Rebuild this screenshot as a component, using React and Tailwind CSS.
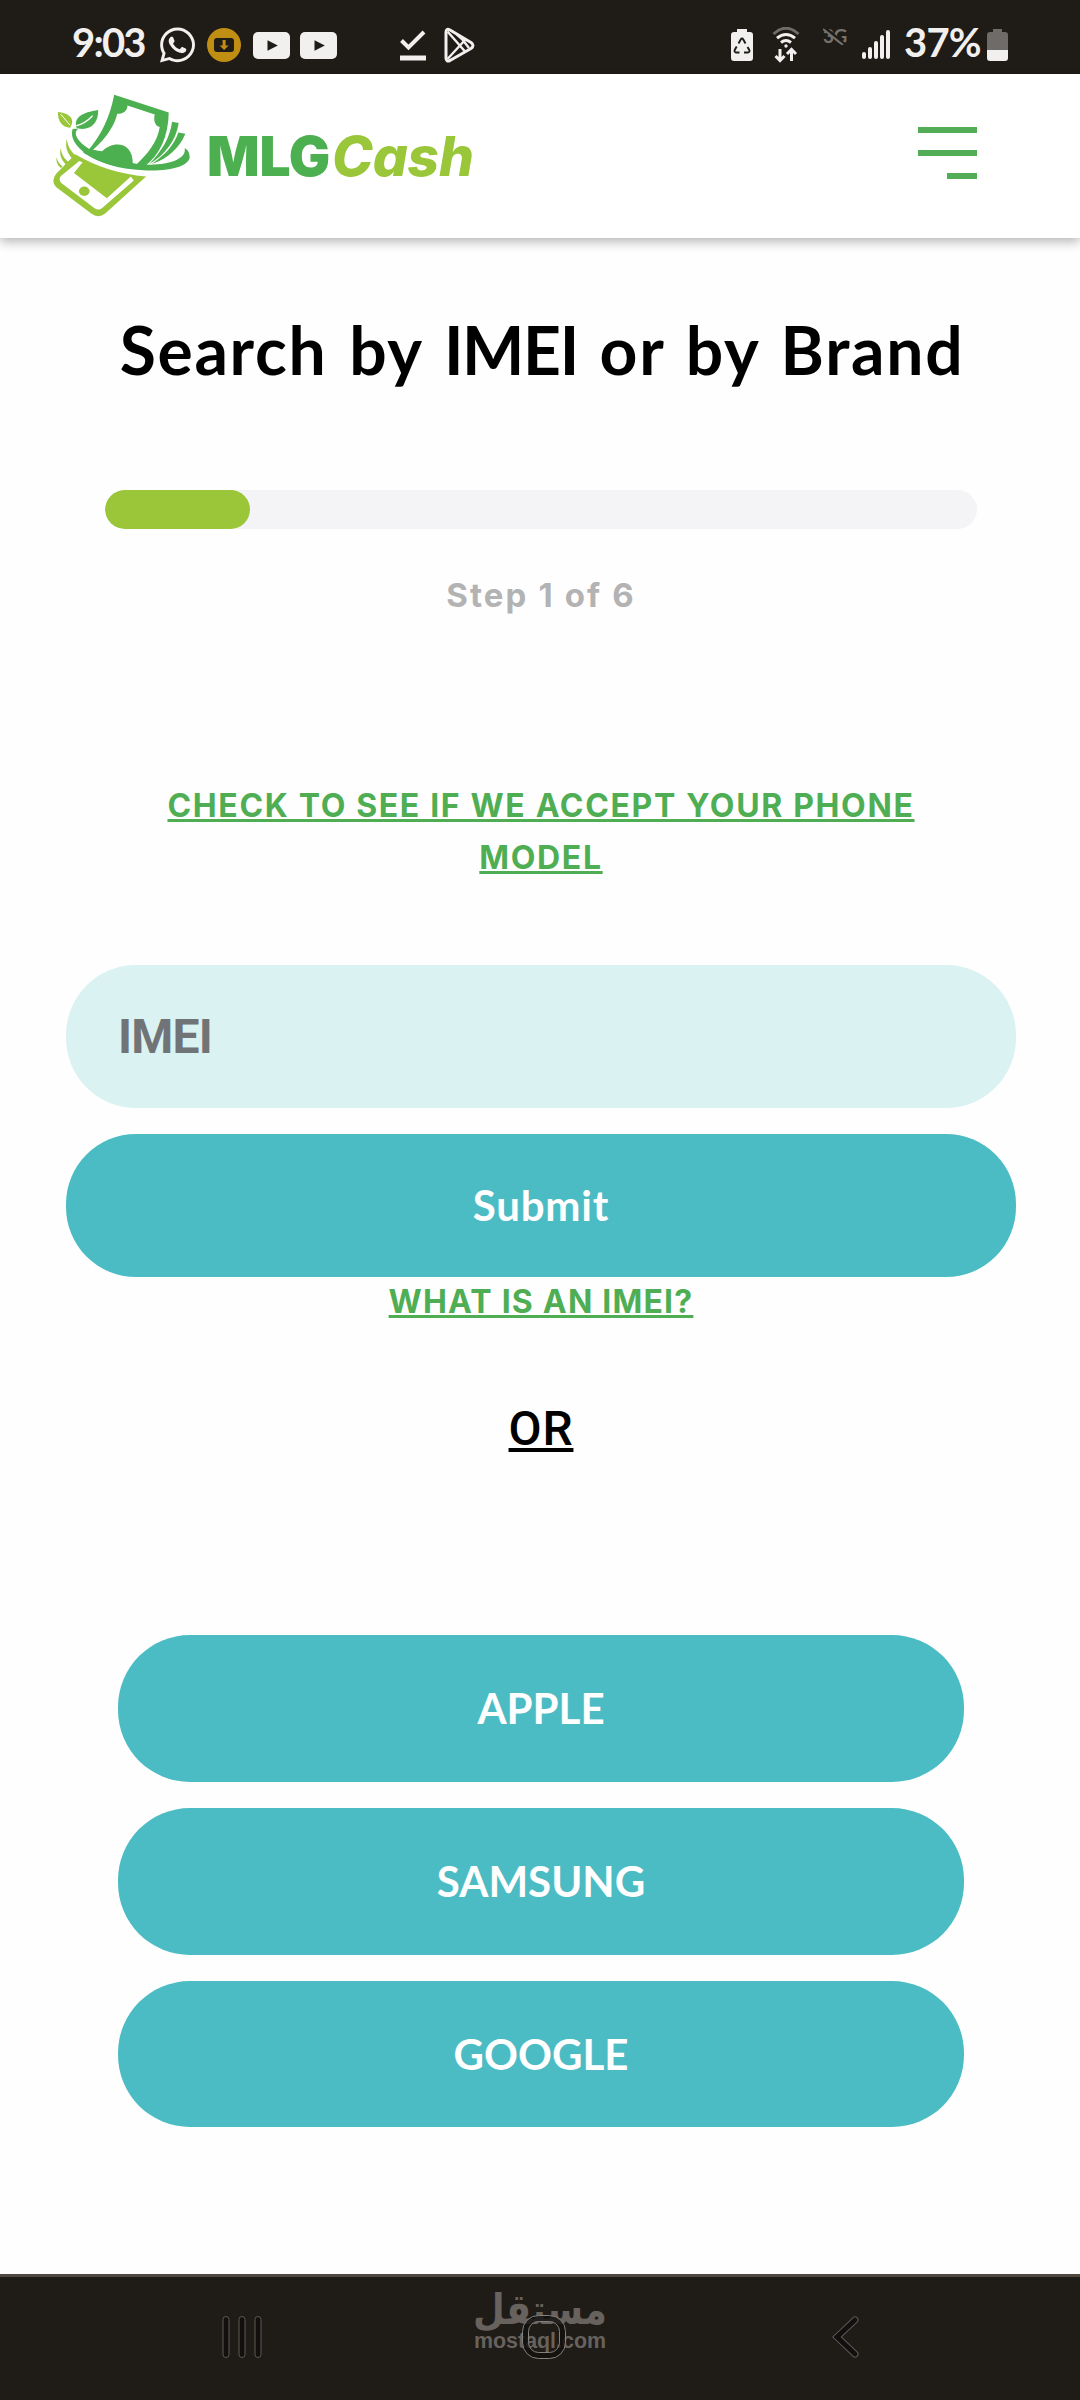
import { FaWhatsapp } from 'react-icons/fa'

const brands = ['APPLE', 'SAMSUNG', 'GOOGLE']
const step = 1
const totalSteps = 6

function YoutubeIcon({ className }) {
  return (
    <svg viewBox="0 0 37 27" className={`h-[27px] w-[37px] ${className}`}>
      <rect width="37" height="27" rx="5" fill="#f1f0ef" />
      <path d="M14.5 8.2v10.6l10.3-5.3z" fill="#1f1b17" />
    </svg>
  )
}

function StatusBar() {
  return (
    <div className="flex h-[74px] items-start bg-[#1f1b17] font-[Lato] text-[#f1f0ef]">
      <span className="mt-[18px] ml-[72px] w-[74px] text-[40px] leading-[48px] font-bold tracking-[-1.8px] whitespace-nowrap">9:03</span>
      <FaWhatsapp className="mt-[25px] ml-[14px] h-[40px] w-[35px]" />
      <svg viewBox="0 0 34 34" className="mt-[28px] ml-[12px] h-[34px] w-[34px]">
        <circle cx="17" cy="17" r="17" fill="#c18e14" />
        <rect x="7" y="10" width="20" height="14" rx="3" fill="#1f1b17" />
        <path d="M15.6 12h3v5.500h3l-4.500 4.500-4.500-4.500h3z" fill="#c18e14" />
      </svg>
      <YoutubeIcon className="mt-[32px] ml-[12px]" />
      <YoutubeIcon className="mt-[32px] ml-[10px]" />
      <svg viewBox="0 0 26 31" className="mt-[30px] ml-[63px] h-[31px] w-[26px]">
        <path d="M1.500 10.500l7 7L24 2" fill="none" stroke="#f1f0ef" strokeWidth="4" />
        <path d="M0 28h26" stroke="#f1f0ef" strokeWidth="5" />
      </svg>
      <svg viewBox="0 0 32 36" className="mt-[27px] ml-[18px] h-[36px] w-[32px]" fill="none" stroke="#f1f0ef" strokeLinejoin="round">
        <path d="M2 5Q2 1 6 3L27 15.500Q31 18.500 27 21.500L6 33.500Q2 35 2 31Z" strokeWidth="3" />
        <path d="M3.500 32L21.500 12.500M3.500 4.500L21.500 25M13 7.500L18 12L25 21" strokeWidth="2.400" />
      </svg>

      <svg viewBox="0 0 22 32" className="mt-[29px] ml-[255px] h-[32px] w-[22px]">
        <path d="M6 0h10v3h3q3 0 3 3v23q0 3-3 3h-16q-3 0-3-3v-23q0-3 3-3h3z" fill="#f1f0ef" />
        <path d="M7.500 14.500l2.200-4q1.300-2 2.600 0l2.200 4M16.500 18l1.800 3q.8 2-1.300 2.500h-4M8.500 23.500h-3.500q-2-.5-1.300-2.500l2-3.500" fill="none" stroke="#1f1b17" strokeWidth="1.900" />
      </svg>
      <svg viewBox="0 0 28 36" className="mt-[27px] ml-[19px] h-[36px] w-[28px]" fill="none" stroke="#f1f0ef" strokeWidth="3">
        <path d="M1.500 7q12.500-11.500 25 0" stroke="#6f6b68" />
        <path d="M5 11.200q9-7.500 18 0M9 15.500q5-4 10 0" />
        <circle cx="14" cy="19" r="1.700" fill="#f1f0ef" stroke="none" />
        <path d="M8 22v11.500M3.500 29l4.500 4.700 4.500-4.700M19.500 34v-11.500M15 27l4.500-4.700 4.500 4.700" />
      </svg>
      <div className="relative mt-[27px] ml-[23px] h-[18px] w-[24px] text-[#76726e]">
        <span className="block text-[19px] leading-[17px] font-bold tracking-[-0.5px]">3G</span>
        <svg viewBox="0 0 24 18" className="absolute inset-0">
          <path d="M1 0l20 17" stroke="#1f1b17" strokeWidth="3" />
          <path d="M0 2l20 16" stroke="#76726e" strokeWidth="2" />
        </svg>
      </div>
      <div className="mt-[30px] ml-[15px] flex h-[29px] w-[28px] items-end justify-between">
        <i className="h-[7px] w-[4px] rounded-full bg-[#f1f0ef]" />
        <i className="h-[12px] w-[4px] rounded-full bg-[#f1f0ef]" />
        <i className="h-[18px] w-[4px] rounded-full bg-[#f1f0ef]" />
        <i className="h-[24px] w-[4px] rounded-full bg-[#f1f0ef]" />
        <i className="h-[29px] w-[4px] rounded-full bg-[#f1f0ef]" />
      </div>
      <span className="mt-[18px] ml-[14px] w-[79px] text-[40px] leading-[48px] font-bold tracking-[-0.8px] whitespace-nowrap">37%</span>
      <svg viewBox="0 0 21 32" className="mt-[29px] ml-[4px] h-[32px] w-[21px]">
        <path d="M6 0h9v3h3q3 0 3 3v15h-21v-15q0-3 3-3h3z" fill="#6f6b68" />
        <path d="M0 21h21v8q0 3-3 3h-15q-3 0-3-3z" fill="#f1f0ef" />
      </svg>
    </div>
  )
}

function LogoMark() {
  return (
    <svg viewBox="60 40 430 375" className="h-[125px] w-[143px]">
      {/* light leaf, speed lines and phone body */}
      <g fill="#9ac63a">
        <path d="M84 97C112 100 131 112 126 132L121 144C94 143 83 122 84 97Z" />
        <path d="M110 178C114 200 121 213 137 228L126 236C110 217 106 202 110 178Z" />
        <path d="M92 205C95 226 103 237 116 247L108 255C92 238 88 224 92 205Z" />
        <path d="M80 232C83 246 88 253 98 260L93 265C82 256 78 247 80 232Z" />
        <path d="M136 224C200 262 270 284 349 291L226 402Q205 418 184 402L78 322Q62 304 78 283Z" />
      </g>
      <path d="M148 244L93 289Q84 300 95 311L194 386Q206 394 217 385L312 303L303 291L231 356L132 280L158 248Z" fill="#fff" />
      <ellipse cx="163" cy="335" rx="16" ry="14" fill="#9ac63a" />
      <path d="M92 103L120 136" stroke="#fff" strokeWidth="3" />

      {/* dark leaf, orbit and banknotes */}
      <g fill="#4caf50">
        <path d="M205 91C206 129 184 151 149 147L139 143C132 112 157 99 205 91Z" />
        <path d="M128 148C112 195 190 265 340 272C425 276 480 258 480 231C479 217 474 210 465 206C472 240 410 260 335 254C240 248 155 207 139 169Q134 154 146 146Z" />
        <path d="M253 45L417 98C416 170 390 227 342 262L170 218C216 165 240 112 253 45Z" />
        <path d="M427 126L447 130C439 184 405 226 358 254C399 211 421 172 427 126Z" />
        <path d="M446 158L467 162C449 205 416 236 366 253C409 222 433 196 446 158Z" />
      </g>
      <path d="M139 138C162 133 174 123 188 108" fill="none" stroke="#fff" strokeWidth="4" />
      <path d="M293 77L375 104C370 123 377 139 390 142C383 188 352 225 318 256L309 252C310 183 247 182 215 216L188 212C236 170 257 128 262 102C280 103 293 93 293 77Z" fill="#fff" />
      <path d="M170 207L215 215L260 228L308 250L335 255L338 268C260 266 205 247 160 219Z" fill="#4caf50" />
    </svg>
  )
}

function Header() {
  return (
    <header className="flex h-[164px] items-start bg-white shadow-[0_4px_10px_rgba(0,0,0,0.28)]">
      <div className="mt-[19px] ml-[50px] flex">
        <LogoMark />
        <p className="mt-[30px] ml-[14px] font-[Inter] text-[55px] leading-[66px] font-black tracking-[-0.2px] text-[#4caf50]">
          MLG<span className="ml-[2px] font-extrabold tracking-[-0.2px] text-[#9ac63a] italic">Cash</span>
        </p>
      </div>
      <button className="mt-[53px] mr-[103px] ml-auto flex w-[59px] flex-col items-end gap-[17px]">
        <span className="h-[6px] w-full bg-[#53ad57]" />
        <span className="h-[6px] w-full bg-[#53ad57]" />
        <span className="h-[6px] w-[30px] bg-[#53ad57]" />
      </button>
    </header>
  )
}

function NavBar() {
  return (
    <nav className="relative mt-auto h-[126px] border-t-[3px] border-[#4f463f] bg-[#1f1b17]">
      <div className="flex items-center pt-[37px]">
        <svg viewBox="0 0 42 44" className="ml-[221px] h-[44px] w-[42px]" fill="#12100e" stroke="#5d5956">
          <rect x="2" y="1.500" width="6" height="41" rx="3" />
          <rect x="18" y="1.500" width="6" height="41" rx="3" />
          <rect x="34" y="1.500" width="6" height="41" rx="3" />
        </svg>
        <svg viewBox="0 0 46 46" className="relative z-10 ml-[258px] h-[46px] w-[46px]" fill="none">
          <rect x="4.500" y="4.500" width="37" height="37" rx="13" stroke="#12100e" strokeWidth="6" strokeOpacity="0.8" />
          <rect x="1.500" y="1.500" width="43" height="43" rx="16" stroke="#85817e" />
          <rect x="7.500" y="7.500" width="31" height="31" rx="10" stroke="#85817e" />
        </svg>
        <svg viewBox="0 0 28 44" className="ml-[265px] h-[44px] w-[28px]" strokeLinecap="round" fill="none">
          <path d="M23 5L5 22L23 39" stroke="#5d5956" strokeWidth="7" />
          <path d="M23 5L5 22L23 39" stroke="#12100e" strokeWidth="5" />
        </svg>
      </div>
      <svg viewBox="0 0 130 70" className="absolute top-[11px] left-[475px] h-[70px] w-[130px] overflow-visible" fill="#67625e">
        <text x="65" y="36" textAnchor="middle" direction="rtl" textLength="134" lengthAdjust="spacingAndGlyphs" className="font-['DejaVu_Sans'] text-[42px] font-bold">مستقل</text>
        <text x="-1" y="60" textLength="132" lengthAdjust="spacingAndGlyphs" className="font-['Liberation_Sans'] text-[22px] font-bold">mostaql.com</text>
      </svg>
    </nav>
  )
}

export default function App() {
  return (
    <div className="flex h-[2400px] w-[1080px] flex-col overflow-hidden bg-[#fefefe]">
      <StatusBar />
      <Header />

      <main className="flex flex-col items-center pl-[2px]">
        <h1 className="mt-[72px] pl-[2px] font-[Lato] text-[66px] leading-[80px] font-bold tracking-[1.7px] [word-spacing:4px] whitespace-nowrap text-black">
          Search by <span className="tracking-[-1.4px]">IMEI</span> or by Brand
        </h1>
        <div className="mt-[100px] h-[39px] w-[872px] overflow-hidden rounded-full bg-[#f4f4f6]">
          <div className="h-full rounded-full bg-[#9bc63a]" style={{ width: `${(step / totalSteps) * 100}%` }} />
        </div>
        <p className="mt-[45px] font-[Inter] text-[33px] leading-[42px] font-bold tracking-[2.1px] text-[#b3b3b3]">
          Step {step} of {totalSteps}
        </p>

        <a className="mt-[164px] w-[800px] text-center font-[Inter] text-[32px] leading-[52px] font-bold tracking-[1.65px] text-[#4fae54] underline decoration-[3px] underline-offset-[2px] [text-decoration-skip-ink:none]">
          CHECK TO SEE IF WE ACCEPT YOUR PHONE MODEL
        </a>

        <input
          placeholder="IMEI"
          className="mt-[81px] h-[143px] w-[950px] rounded-[70px] bg-[#daf2f1] px-[52px] font-[Roboto] text-[48px] font-bold tracking-[-0.8px] placeholder:text-[#717477]"
        />
        <button className="mt-[26px] h-[143px] w-[950px] rounded-[70px] bg-[#4bbcc4] font-[Lato] text-[42px] font-bold tracking-[0.8px] text-white">
          Submit
        </button>
        <a className="font-[Inter] text-[32px] leading-[50px] font-bold tracking-[1.2px] text-[#4fae54] underline decoration-[3px] underline-offset-[2px] [text-decoration-skip-ink:none]">
          WHAT IS AN IMEI?
        </a>

        <p className="mt-[72px] font-[Roboto] text-[48px] leading-[60px] font-medium tracking-[0.8px] text-black underline decoration-[4px] underline-offset-[3px] [text-decoration-skip-ink:none]">
          OR
        </p>

        <div className="mt-[176px] flex flex-col gap-[26px]">
          {brands.map((brand) => (
            <button key={brand} className="h-[147px] w-[846px] rounded-[72px] bg-[#4bbcc4] font-[Lato] text-[42px] font-bold text-white last:h-[146px]">
              {brand}
            </button>
          ))}
        </div>
      </main>

      <NavBar />
    </div>
  )
}
